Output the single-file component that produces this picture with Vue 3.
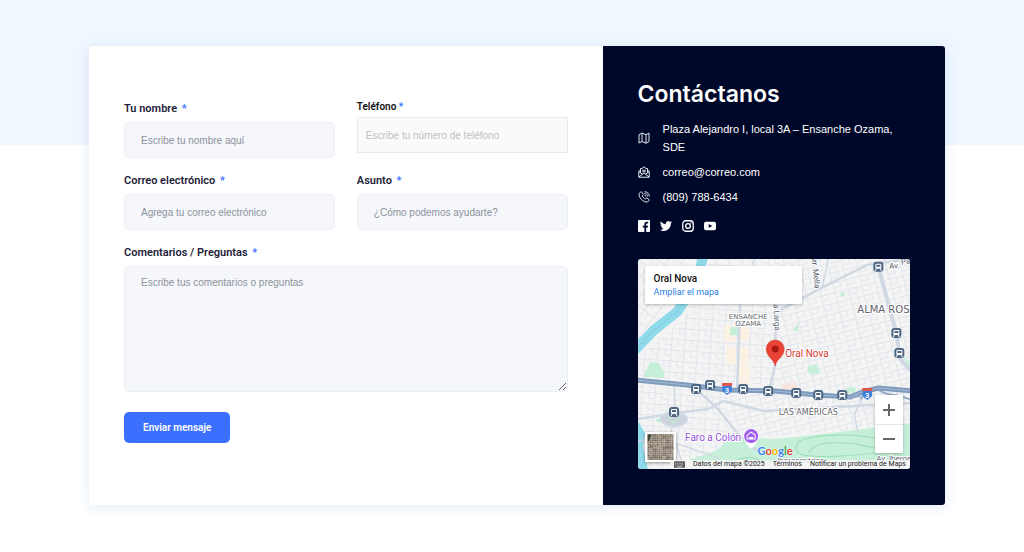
<script setup>
const fields = [
  { id: 'nombre', label: 'Tu nombre', hint: 'Escribe tu nombre aquí', type: 'text' },
  { id: 'telefono', label: 'Teléfono', hint: 'Escribe tu número de teléfono', type: 'tel', plain: true },
  { id: 'correo', label: 'Correo electrónico', hint: 'Agrega tu correo electrónico', type: 'email' },
  { id: 'asunto', label: 'Asunto', hint: '¿Cómo podemos ayudarte?', type: 'text' }
]

const stations = [
  [58, 130], [72, 126], [105, 130], [130, 132], [158, 134], [180, 136], [204, 136],
  [36, 153], [240, 8], [258, 74], [261, 94]
]
const shields = [[89, 130], [229, 135]]

// Deterministic mottling for the satellite thumbnail
const tones = ['#7d7064', '#8d8073', '#9a8a7a', '#6d655a', '#8f7f70', '#7b6e64', '#a39586']
const tiles = Array.from({ length: 196 }, (_, i) => ({
  x: (i % 14) * 2,
  y: Math.floor(i / 14) * 2,
  fill: tones[(i * i * 3 + i * 5 + Math.floor(i / 9)) % 7]
}))
</script>

<template>
  <main class="page">
    <section class="card">
      <form class="form" @submit.prevent>
        <div class="fields">
          <div v-for="f in fields" :key="f.id" class="field" :class="{ plain: f.plain }">
            <label :for="f.id">{{ f.label }} <span class="req">*</span></label>
            <input :id="f.id" :type="f.type" :placeholder="f.hint" />
          </div>
          <div class="field wide">
            <label for="comentarios">Comentarios / Preguntas <span class="req">*</span></label>
            <textarea id="comentarios" placeholder="Escribe tus comentarios o preguntas"></textarea>
          </div>
        </div>
        <button class="send" type="submit">Enviar mensaje</button>
      </form>

      <aside class="contact">
        <h2>Contáctanos</h2>
        <ul class="info">
          <li>
            <svg viewBox="0 0 24 24" class="icon"><path d="M2 5.500 8 2v17l-6 3zM8 2l8 3.500v17L8 19M16 5.500 22 2v17l-6 3.500" /></svg>
            <span>Plaza Alejandro I, local 3A – Ensanche Ozama, SDE</span>
          </li>
          <li>
            <svg viewBox="0 0 24 24" class="icon"><path d="M5 8 1.500 11v11.500h21V11L19 8M5 14V5h3l4-3.500 4 3.500h3v9M1.500 11 9 16.500M22.500 11 15 16.500M2 22l10-8 10 8M8.500 8.500h7M8.500 11.500h7" /></svg>
            <span>correo@correo.com</span>
          </li>
          <li>
            <svg viewBox="0 0 24 24" class="icon"><path d="M5.500 2 2.500 4.500C-.5 12 11 23.500 19 22l3-3c.6-.8.400-1.800-.4-2.400l-3.500-2.300c-.8-.5-1.500-.4-2.100.3l-1.300 1.500c-2.500-1-5.200-3.700-6.200-6.200L10 8.500c.7-.6.8-1.300.3-2.100L8 2.500c-.6-.9-1.600-1.100-2.500-.5zM13 1.500c5.500 0 9.500 4 9.500 9.500M13 5c3.500 0 6 2.500 6 6M13 8.500c1.500 0 2.500 1 2.500 2.500" /></svg>
            <span>(809) 788-6434</span>
          </li>
        </ul>

        <nav class="social" aria-label="Redes sociales">
          <a href="#" aria-label="Facebook">
            <svg viewBox="0 0 24 24"><path fill="#fff" d="M2 0h20a2 2 0 0 1 2 2v20a2 2 0 0 1-2 2h-5.500v-9h3.200l.5-3.700h-3.700V9c0-1.100.4-1.800 1.900-1.800h1.900V3.800c-.4 0-1.500-.2-2.800-.2-2.900 0-4.800 1.700-4.800 4.900v2.800H9.500V15h3.200v9H2a2 2 0 0 1-2-2V2a2 2 0 0 1 2-2z" /></svg>
          </a>
          <a href="#" aria-label="Twitter">
            <svg viewBox="0 0 24 24"><path fill="#fff" d="M24 4.600a10 10 0 0 1-2.800.8 5 5 0 0 0 2.100-2.700 10 10 0 0 1-3.100 1.200 4.900 4.900 0 0 0-8.400 4.500A14 14 0 0 1 1.700 3.100a4.900 4.900 0 0 0 1.500 6.600 5 5 0 0 1-2.200-.6c0 2.400 1.600 4.400 3.900 4.900a5 5 0 0 1-2.200.1 4.900 4.900 0 0 0 4.600 3.400A9.900 9.900 0 0 1 0 19.500 14 14 0 0 0 21.500 7.100 10 10 0 0 0 24 4.600z" /></svg>
          </a>
          <a href="#" aria-label="Instagram">
            <svg viewBox="0 0 24 24" fill="none" stroke="#fff" stroke-width="2.600"><rect x="1.500" y="1.500" width="21" height="21" rx="6" /><circle cx="12" cy="12" r="4.800" /><circle cx="18" cy="6" r="1.300" fill="#fff" stroke="none" /></svg>
          </a>
          <a href="#" aria-label="YouTube">
            <svg viewBox="0 0 24 24"><path fill="#fff" fill-rule="evenodd" d="M4 3.500h16a4 4 0 0 1 4 4v9a4 4 0 0 1-4 4H4a4 4 0 0 1-4-4v-9a4 4 0 0 1 4-4zM9.500 8v8l7-4z" /></svg>
          </a>
        </nav>

        <div class="map">
          <svg class="canvas" viewBox="0 0 272 210" preserveAspectRatio="xMidYMid slice">
            <defs>
              <pattern id="gridA" width="13" height="11" patternUnits="userSpaceOnUse" patternTransform="rotate(4)">
                <path d="M0 .5h13M.5 0v11M7 0v5M7 6h6" fill="none" stroke="#e0e4e9" stroke-width=".9" />
              </pattern>
              <pattern id="gridB" width="14" height="10" patternUnits="userSpaceOnUse" patternTransform="rotate(-14)">
                <path d="M0 .5h14M.5 0v10M8 0v5M0 5.500h9" fill="none" stroke="#e0e4e9" stroke-width=".9" />
              </pattern>
              <pattern id="gridC" width="12" height="12" patternUnits="userSpaceOnUse" patternTransform="rotate(38)">
                <path d="M0 .5h12M.5 0v12M6 0v6" fill="none" stroke="#e0e4e9" stroke-width=".9" />
              </pattern>
            </defs>
            <rect width="272" height="210" fill="#f4f4f5" />
            <path d="M0 0h60L0 88z" fill="url(#gridC)" />
            <path d="M72 0h70v130L0 121V96L46 60z" fill="url(#gridA)" />
            <path d="M142 0h130v131l-40 2-90-3z" fill="url(#gridB)" />
            <path d="M0 121l90 10v80H0z" fill="url(#gridA)" />
            <path d="M90 131l90 6 92-6v36l-182 13z" fill="url(#gridB)" />

            <!-- Commercial blocks -->
            <g fill="#fcf1df" opacity=".8">
              <path d="M86 66h11v17H86zM102 66h9v15h-9zM88 88h10v17H88zM102 88h9v17h-9zM99 106h13v18H99z" />
            </g>
            <path d="M144 125l14-2 2 7-16 1z" fill="#fbe4df" />

            <!-- Parks -->
            <g fill="#c5efd8">
              <path d="M5 118l7-15 9 1 6 11-2 4z" />
              <path d="M92 68h9v8h-9zM170 107l9-1 3 8-9 2-4-4zM208 129l9-1v6h-9zM156 70l4-6v8h-5zM202 34l4-1v4h-4z" />
              <path d="M52 200l26-8 14-14 45 2 56-6 79-10v38l-100 3-112 1-10-3z" />
              <path d="M17 161l8-4 3 3-7 4zM264 96l8 8v8zM15 14l6 4-2 3-5-3z" />
            </g>
            <g fill="none" stroke="#9bdcb6" stroke-width="1">
              <path d="M163 181c20-6 50-7 73-2 14 2 18 12 6 14-30 4-57 6-76 3-11-2-10-11-3-15z" />
              <path d="M170 194c8-14 28-10 40-10s22 8 35 2" />
              <path d="M95 205c8-10 23-7 30-2" />
            </g>

            <!-- River -->
            <path d="M65-2 58 24 39 53 16 71-3 91" fill="none" stroke="#8fdaeb" stroke-width="10" stroke-linejoin="round" />
            <path d="M0 162l7 12-2 14 5 23H0z" fill="#8fdaeb" />
            <path d="M65-2 58 24 39 53 16 71-3 91" fill="none" stroke="#6cbacf" stroke-width=".8" stroke-dasharray="2 2" />

            <!-- Avenues -->
            <g fill="none" stroke="#d0d9e3" stroke-width="2.500">
              <path d="M102 46l-3 84M137 44v62l-6 25M142 51l47-25 40-20 43-6M58 130l22 20 19 24 20 18M0 160l38-6 32-4 15-8 40 10 147-8" />
              <path d="M36 122l1 30-4 20 14 39M225 136l-9 20 4 18M190 0l-6 28M116 0l-14 46M0 182c18-6 46 4 82 18" stroke-width="1.500" />
              <path d="M240 8l18 66 4 26 10 12" stroke-width="4" />
              <ellipse cx="36" cy="160" rx="13" ry="7" fill="#cbd4de" stroke-width="2" />
            </g>
            <path d="M29 159l5-3v4zM39 157l5 2-5 3zM31 162h8l-4 3z" fill="#bfe8cf" />

            <!-- Highway -->
            <path d="M-2 121l51 5 40 5 48 1 42 4 33 2 12-5 16-4 34 3" fill="none" stroke="#7e9abd" stroke-width="5" />
            <path d="M-2 121l51 5 40 5 48 1 42 4 33 2 12-5 16-4 34 3" fill="none" stroke="#a5b9d1" stroke-width="1" />
            <path d="M208 139l14-2M240 131c12 8 20 2 34 11M222 140l8-9" fill="none" stroke="#8fa8c6" stroke-width="2" />
            <path d="M248 139c5-4 14-3 18 2l-12 3z" fill="#a6e2bb" />

            <g v-for="([x, y], i) in stations" :key="'s' + i" :transform="`translate(${x} ${y})`">
              <rect x="-5" y="-5" width="10" height="10" rx="3" fill="#4d6783" />
              <rect x="-3" y="-3" width="6" height="5" rx="1" fill="#fff" />
              <path d="M-2-2h4v2h-4z" fill="#4d6783" />
              <path d="M-3 4l1-2M3 4 2 2" stroke="#fff" stroke-width="1" />
            </g>
            <g v-for="([x, y], i) in shields" :key="'h' + i" :transform="`translate(${x} ${y})`">
              <path d="M-4-5h8l1 5c0 3-3 4-5 6-2-2-5-3-5-6z" fill="#3d7fda" />
              <path d="M-5-6H5v3H-5z" fill="#e0564c" />
              <text y="4" text-anchor="middle" class="num">3</text>
            </g>

            <g class="place">
              <text x="110" y="60" text-anchor="middle">ENSANCHE</text>
              <text x="110" y="67" text-anchor="middle">OZAMA</text>
              <text x="170" y="156" text-anchor="middle" class="mid">LAS AMÉRICAS</text>
              <text x="219" y="54" class="big">ALMA ROSA</text>
            </g>
            <g class="street">
              <text transform="translate(173 -3) rotate(84)">arr. Mella</text>
              <text transform="translate(135 41) rotate(87)">na Larga</text>
              <text transform="translate(251 10) rotate(-4)">Av.</text>
              <text transform="translate(263 6) rotate(-10)">Padre</text>
              <text x="238" y="202">Av. Iberoamérica</text>
              <text x="139" y="204">Iberoamérica</text>
            </g>

            <path d="M113 190l-6-6h12z" fill="#fff" />
            <circle cx="113" cy="177" r="8" fill="#fff" />
            <circle cx="113" cy="177" r="7" fill="#a15cf0" />
            <path d="M109 176l4-3 4 3v4h-8z" fill="none" stroke="#fff" />
            <path d="M111 178h4v2h-4z" fill="#fff" />
            <text x="47" y="182" class="faro">Faro a Colón</text>

            <path d="M137 107c-1-7-9-9-9-17a9 9 0 0 1 18 0c0 8-8 10-9 17z" fill="#ea4335" stroke="#c5362b" stroke-width=".5" />
            <circle cx="137" cy="90" r="3.500" fill="#a81712" />
            <text x="147" y="98" class="pin">Oral Nova</text>
          </svg>

          <div class="bubble">
            <strong>Oral Nova</strong>
            <a href="#">Ampliar el mapa</a>
          </div>

          <div class="zoom">
            <button type="button" aria-label="Acercar"><svg viewBox="0 0 12 12"><path d="M0 6h12M6 0v12" /></svg></button>
            <button type="button" aria-label="Alejar"><svg viewBox="0 0 12 12"><path d="M0 6h12" /></svg></button>
          </div>

          <button class="thumb" type="button" aria-label="Satélite">
            <svg viewBox="0 0 28 28">
              <rect v-for="(t, i) in tiles" :key="i" :x="t.x" :y="t.y" width="2" height="2" :fill="t.fill" />
              <path d="M0 0h5l-2 6-3 4zM0 16l28-5M12 0l5 28" fill="#3f4a3d" stroke="#b9a994" stroke-width=".7" />
            </svg>
          </button>

          <a class="google" href="#" aria-label="Google"><span class="b">G</span><span class="r">o</span><span class="y">o</span><span class="b">g</span><span class="g">l</span><span class="r">e</span></a>

          <div class="legal">
            <svg viewBox="0 0 12 8" class="keys"><rect width="12" height="7" rx="1" fill="#555" /><path d="M1 2h10M1 4h10" stroke="#fff" stroke-width="1" stroke-dasharray="1 1" /><path d="M3 6h6" stroke="#fff" stroke-width=".8" /></svg>
            <span>Datos del mapa ©2025</span>
            <a href="#">Términos</a>
            <a href="#">Notificar un problema de Maps</a>
          </div>
        </div>
      </aside>
    </section>
  </main>
</template>

<style>
body {
  background: #fff;
}
</style>

<style scoped>
* {
  box-sizing: border-box;
}
.page {
  min-height: 100vh;
  padding: 46px 79px 46px 89px;
  background: linear-gradient(#f0f7ff, #f0f7ff) top / 100% 145px no-repeat;
  font-family: Roboto, sans-serif;
}
.card {
  display: grid;
  grid-template-columns: 3fr 2fr;
  overflow: hidden;
  background: #fff;
  border-radius: 3px;
  box-shadow: 0 2px 14px rgba(60, 110, 200, 0.14);
}
.form {
  padding: 54px 35px 35px;
}
.fields {
  display: grid;
  grid-template-columns: 1fr 1fr;
  gap: 14px 22px;
}
.field {
  display: flex;
  flex-direction: column;
  gap: 4px;
  min-width: 0;
}
.wide {
  grid-column: 1 / -1;
}
label {
  color: #1d2239;
  font-size: 11px;
  font-weight: 600;
  line-height: 18px;
}
.req {
  margin-left: 2px;
  color: #3b70ff;
}
input,
textarea {
  width: 100%;
  border: 1px solid #eceef5;
  border-radius: 5px;
  background: #f5f7fb;
  color: #1d2239;
  font-family: "Liberation Sans", Arial, sans-serif;
  font-size: 10px;
  line-height: 14px;
}
input {
  height: 36px;
  padding: 0 16px;
}
textarea {
  display: block;
  height: 126px;
  padding: 9px 16px;
  resize: vertical;
}
::placeholder {
  color: #8d929c;
  opacity: 1;
}
.plain {
  gap: 3px;
}
.plain label {
  color: #111;
  font-size: 10px;
  line-height: 14px;
}
.plain .req {
  margin-left: 0;
}
.plain input {
  padding: 0 8px;
  border-color: #e8e8e8;
  border-radius: 1px;
  background: #fafafa;
}
.plain input::placeholder {
  color: #c2c0be;
}
.send {
  height: 31px;
  margin-top: 20px;
  padding: 0 19px;
  border: 0;
  border-radius: 5px;
  background: #3b70ff;
  color: #fff;
  font-family: Roboto, sans-serif;
  font-size: 10px;
  font-weight: 600;
}
.contact {
  padding: 35px 35px 36px;
  background: #000829;
  color: #fff;
}
h2 {
  margin: 0 0 13px;
  font-family: Inter, sans-serif;
  font-size: 23px;
  font-weight: 600;
  line-height: 26px;
}
.info {
  display: grid;
  gap: 7px;
  margin: 0;
  padding: 0;
  list-style: none;
  font-family: "Liberation Sans", Arial, sans-serif;
  font-size: 11px;
  line-height: 18px;
}
.info li {
  display: flex;
  align-items: center;
  gap: 13px;
}
.icon {
  flex: none;
  width: 12px;
  height: 12px;
  fill: none;
  stroke: #e3e5ec;
  stroke-width: 2;
}
.social {
  display: flex;
  gap: 10px;
  margin: 14px 0 27px;
}
.social a,
.social svg {
  display: block;
  width: 12px;
  height: 12px;
}
.map {
  position: relative;
  height: 210px;
  overflow: hidden;
  border-radius: 3px;
}
.canvas {
  display: block;
  width: 100%;
  height: 100%;
}
.canvas text {
  paint-order: stroke;
  stroke: #fff;
  stroke-width: 2px;
}
.canvas .num {
  fill: #fff;
  stroke: none;
  font-size: 7px;
  font-weight: 700;
}
.place text {
  fill: #5f646b;
  font-family: "DejaVu Sans", sans-serif;
  font-size: 7px;
}
.place .mid {
  font-size: 8px;
}
.place .big {
  font-size: 10px;
}
.street text {
  fill: #59636f;
  font-size: 8px;
}
.canvas .faro {
  fill: #9150e0;
  font-size: 10px;
}
.canvas .pin {
  fill: #dc3a30;
  font-size: 10px;
}
.bubble {
  position: absolute;
  top: 7px;
  left: 7px;
  display: flex;
  flex-direction: column;
  width: 157px;
  padding: 6px 9px 5px;
  background: #fff;
  border-radius: 1px;
  box-shadow: 0 1px 3px rgba(0, 0, 0, 0.25);
}
.bubble strong {
  color: #111;
  font-size: 10px;
  font-weight: 500;
  line-height: 14px;
}
.bubble a {
  color: #2a7de8;
  font-size: 9px;
  line-height: 13px;
  text-decoration: none;
}
.zoom {
  position: absolute;
  right: 7px;
  bottom: 16px;
  width: 28px;
  background: #fff;
  box-shadow: 0 1px 3px rgba(0, 0, 0, 0.25);
}
.zoom button {
  display: grid;
  place-items: center;
  width: 100%;
  height: 29px;
  padding: 0;
  border: 0;
  background: none;
}
.zoom button + button {
  border-top: 1px solid #e6e6e6;
}
.zoom svg {
  width: 12px;
  height: 12px;
  stroke: #666;
  stroke-width: 2;
}
.thumb {
  position: absolute;
  left: 7px;
  bottom: 7px;
  width: 31px;
  height: 30px;
  padding: 0;
  border: 2px solid #fff;
  background: #fff;
  box-shadow: 0 1px 3px rgba(0, 0, 0, 0.4);
}
.thumb svg {
  display: block;
  width: 100%;
  height: 100%;
}
.google {
  position: absolute;
  left: 120px;
  bottom: 11px;
  font-family: Lato, sans-serif;
  font-size: 11px;
  font-weight: 700;
  line-height: 14px;
  text-decoration: none;
  text-shadow: 0 0 2px #fff;
}
.b { color: #4285f4; }
.r { color: #ea4335; }
.y { color: #f4b400; }
.g { color: #34a853; }
.legal {
  position: absolute;
  right: 0;
  bottom: 0;
  display: flex;
  align-items: center;
  gap: 8px;
  padding: 0 4px;
  background: rgba(245, 245, 245, 0.85);
  color: #222;
  font-size: 7px;
  line-height: 9px;
  white-space: nowrap;
}
.legal a {
  color: inherit;
  text-decoration: none;
}
.keys {
  width: 11px;
  height: 8px;
}
</style>
